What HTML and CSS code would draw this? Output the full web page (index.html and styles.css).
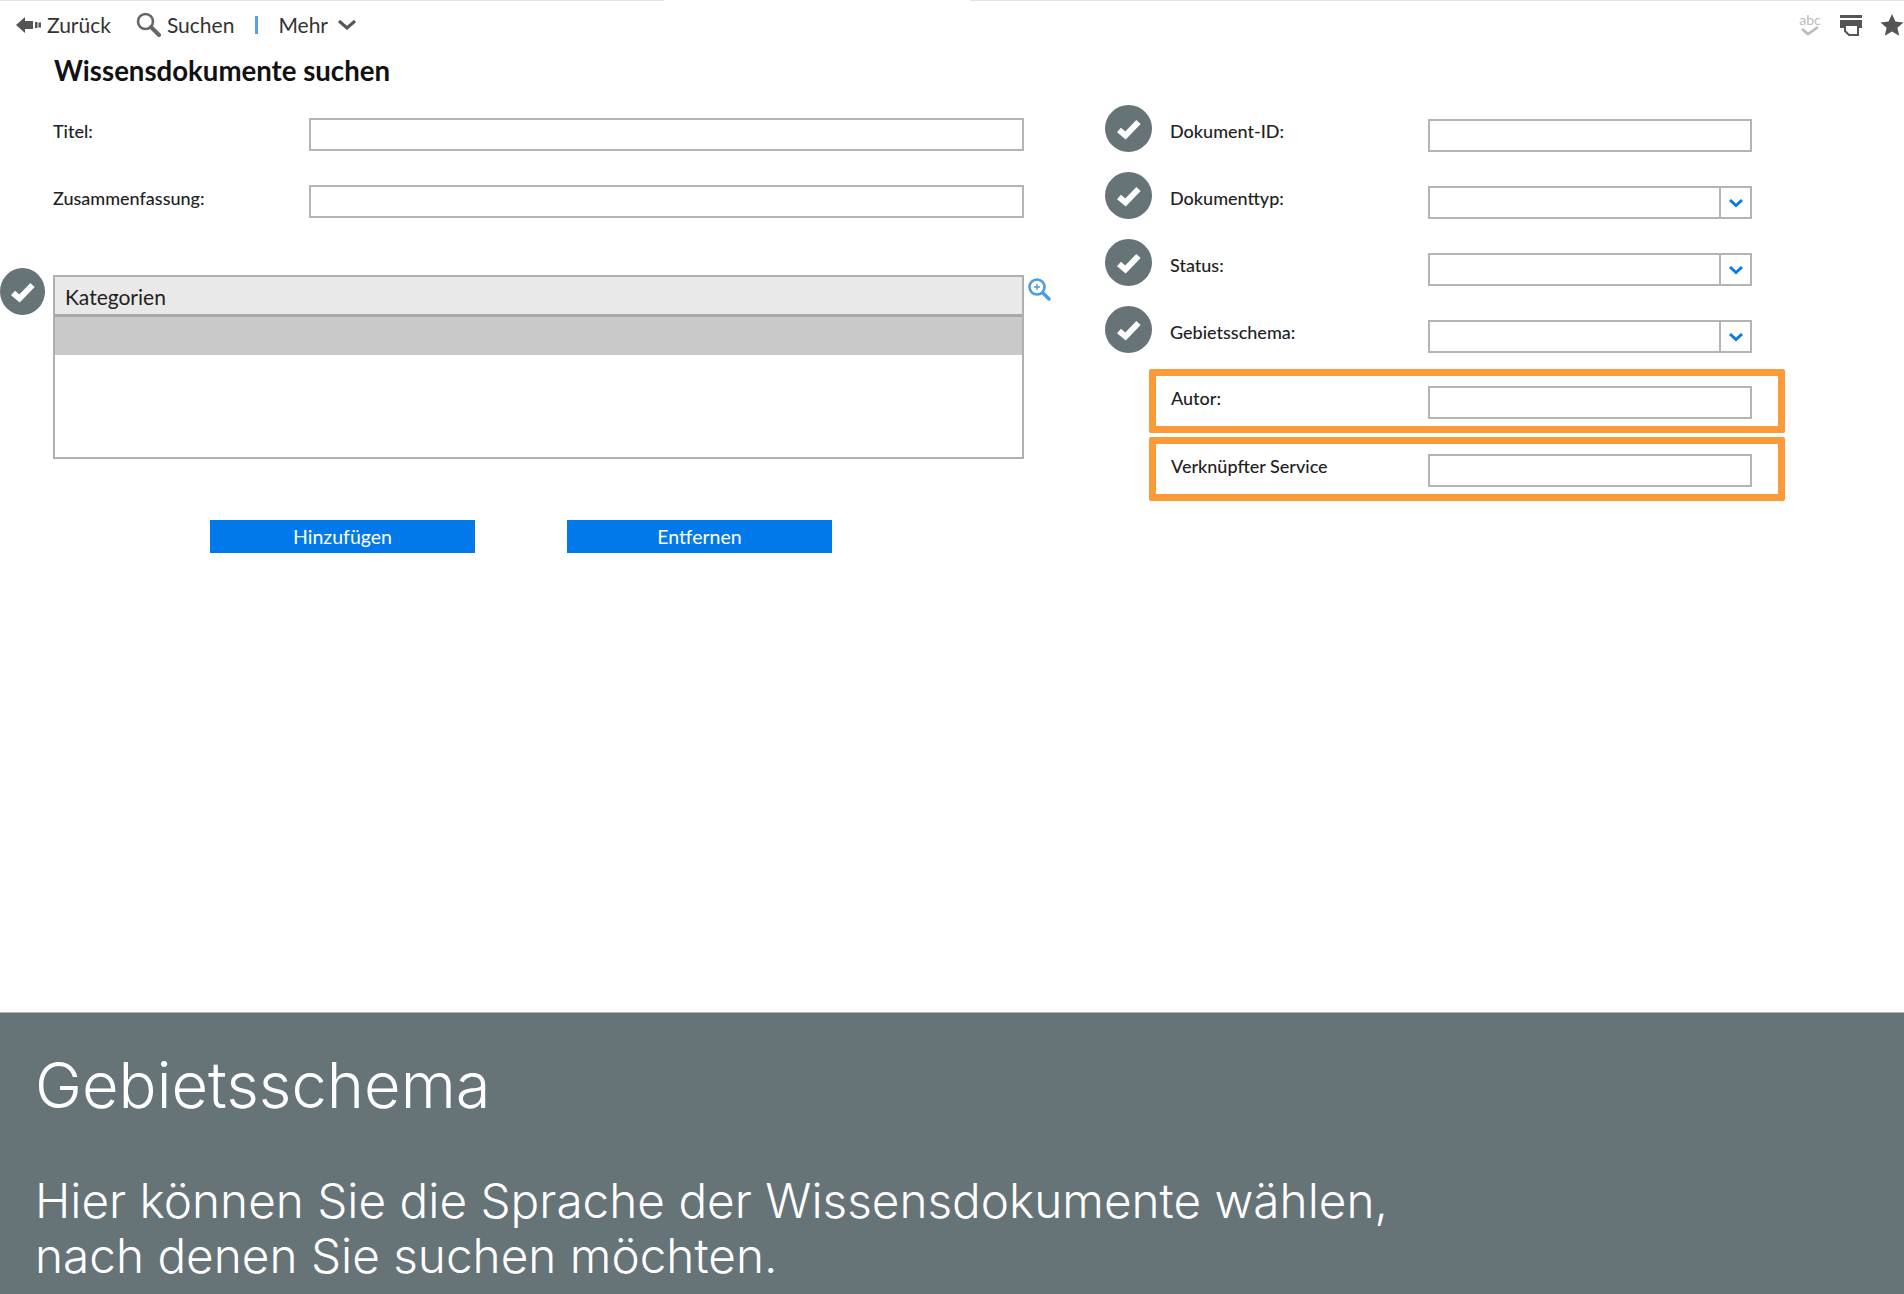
FILE: index.html
```html
<!doctype html>
<html lang="de">
<head>
<meta charset="UTF-8">
<title>Wissensdokumente suchen</title>
<link rel="stylesheet" href="styles.css">
</head>
<body>
<div class="screen">
  <div class="topline"><span></span><span></span></div>
  <div class="toolbar">
    <div class="tools">
      <a class="tool">
        <svg class="ic-back" width="25" height="18" viewBox="0 0 25 18"><path d="M0 9 9 1v4h8v8H9v4z" fill="#555"/><rect x="19" y="6" width="2.500" height="6" fill="#555"/><rect x="22.500" y="6.500" width="2.500" height="5" fill="#555"/></svg>
        Zurück
      </a>
      <a class="tool tool-search">
        <svg width="25" height="25" viewBox="0 0 25 25"><circle cx="9.500" cy="9.500" r="7.500" fill="none" stroke="#666" stroke-width="2.600"/><path d="M15 15l8 8" stroke="#666" stroke-width="4" stroke-linecap="round"/></svg>
        Suchen
      </a>
      <span class="sep"></span>
      <a class="tool">Mehr
        <svg class="ic-more" width="20" height="11" viewBox="0 0 20 11"><path d="M2 2l8 7 8-7" fill="none" stroke="#555" stroke-width="3"/></svg>
      </a>
    </div>
    <div class="tools-right">
      <span class="spell">abc
        <svg width="20" height="10" viewBox="0 0 20 10"><path d="M2 3l6 5L18 1" fill="none" stroke="#bbb" stroke-width="2.600"/></svg>
      </span>
      <svg width="24" height="22" viewBox="0 0 24 22"><rect x="1" y="1" width="22" height="3" fill="#555"/><path d="M1 6h22v8h-4v-3H6v3H1z" fill="#555"/><path d="M6 11h13v10H10l-4-4z" fill="#fff" stroke="#555" stroke-width="2"/></svg>
      <svg width="24" height="22" viewBox="0 0 24 22"><path d="M12 0l3.400 7.600 8.100.8-6.100 5.400 1.800 8-7.200-4.200-7.200 4.200 1.800-8L.5 8.400l8.100-.8z" fill="#555"/></svg>
    </div>
  </div>

  <h1>Wissensdokumente suchen</h1>

  <div class="columns">
    <div class="col-left">
      <div class="row">
        <label>Titel:</label>
        <div class="field"></div>
      </div>
      <div class="row">
        <label>Zusammenfassung:</label>
        <div class="field"></div>
      </div>

      <div class="cat-wrap">
        <span class="check check-left">
          <svg width="26" height="22" viewBox="0 0 26 22"><path d="M3 12l6.500 5.500L22.500 4" fill="none" stroke="#fff" stroke-width="6"/></svg>
        </span>
        <div class="cat">
          <div class="cat-head">Kategorien</div>
          <div class="cat-sel"></div>
        </div>
        <svg class="cat-zoom" width="24" height="24" viewBox="0 0 24 24"><circle cx="10" cy="10" r="7.500" fill="none" stroke="#4a9be0" stroke-width="2.600"/><path d="M16 16l6 6" stroke="#4a9be0" stroke-width="3.400" stroke-linecap="round"/><path d="M10 7v6M7 10h6" stroke="#4a9be0" stroke-width="1.400"/></svg>
      </div>

      <div class="buttons">
        <a class="btn">Hinzufügen</a>
        <a class="btn">Entfernen</a>
      </div>
    </div>

    <div class="col-right">
      <div class="row-r">
        <span class="check"><svg width="26" height="22" viewBox="0 0 26 22"><path d="M3 12l6.500 5.500L22.500 4" fill="none" stroke="#fff" stroke-width="6"/></svg></span>
        <label>Dokument-ID:</label>
        <div class="field"></div>
      </div>
      <div class="row-r">
        <span class="check"><svg width="26" height="22" viewBox="0 0 26 22"><path d="M3 12l6.500 5.500L22.500 4" fill="none" stroke="#fff" stroke-width="6"/></svg></span>
        <label>Dokumenttyp:</label>
        <div class="field select"><span class="arrow"><svg width="16" height="10" viewBox="0 0 16 10"><path d="M2 2l6 5.500L14 2" fill="none" stroke="#0a7be0" stroke-width="3"/></svg></span></div>
      </div>
      <div class="row-r">
        <span class="check"><svg width="26" height="22" viewBox="0 0 26 22"><path d="M3 12l6.500 5.500L22.500 4" fill="none" stroke="#fff" stroke-width="6"/></svg></span>
        <label>Status:</label>
        <div class="field select"><span class="arrow"><svg width="16" height="10" viewBox="0 0 16 10"><path d="M2 2l6 5.500L14 2" fill="none" stroke="#0a7be0" stroke-width="3"/></svg></span></div>
      </div>
      <div class="row-r">
        <span class="check"><svg width="26" height="22" viewBox="0 0 26 22"><path d="M3 12l6.500 5.500L22.500 4" fill="none" stroke="#fff" stroke-width="6"/></svg></span>
        <label>Gebietsschema:</label>
        <div class="field select"><span class="arrow"><svg width="16" height="10" viewBox="0 0 16 10"><path d="M2 2l6 5.500L14 2" fill="none" stroke="#0a7be0" stroke-width="3"/></svg></span></div>
      </div>
      <div class="row-hl">
        <label>Autor:</label>
        <div class="field"></div>
      </div>
      <div class="row-hl">
        <label>Verknüpfter Service</label>
        <div class="field"></div>
      </div>
    </div>
  </div>

  <div class="caption">
    <h2>Gebietsschema</h2>
    <p>Hier können Sie die Sprache der Wissensdokumente wählen,<br>nach denen Sie suchen möchten.</p>
  </div>
</div>
</body>
</html>
```
FILE: styles.css
```css
html, body {
  margin: 0;
  padding: 0;
  background: #fff;
}
.screen {
  width: 1904px;
  height: 1294px;
  display: flex;
  flex-direction: column;
  overflow: hidden;
  font-family: Lato, "Noto Sans", sans-serif;
  color: #222;
}
.topline {
  height: 1px;
  display: flex;
  justify-content: space-between;
}
.topline span {
  background: #e2e2e2;
}
.topline span:first-child {
  width: 664px;
}
.topline span:last-child {
  width: 934px;
}
.toolbar {
  height: 47px;
  display: flex;
  justify-content: space-between;
  align-items: center;
  padding: 0 0 0 16px;
}
.tools {
  display: flex;
  align-items: center;
}
.tool {
  display: flex;
  align-items: center;
  gap: 6px;
  font-size: 21px;
  color: #333;
}
.tool-search {
  margin-left: 25px;
}
.sep {
  width: 3px;
  height: 18px;
  background: #5a9fd8;
  margin: 0 20px 0 21px;
}
.ic-more {
  margin-left: 3px;
}
.tools-right {
  display: flex;
  align-items: center;
  gap: 17px;
}
.spell {
  display: flex;
  flex-direction: column;
  align-items: center;
  font-size: 14px;
  line-height: 12px;
  color: #bbb;
  width: 24px;
}
h1 {
  margin: 5px 0 0 54px;
  font-size: 27.600px;
  line-height: 36px;
  font-weight: 700;
  color: #111;
}
.columns {
  display: flex;
  flex: 1;
  margin-top: 16px;
}
.col-left {
  width: 971px;
  margin-left: 53px;
  padding-top: 13px;
}
.col-right {
  margin-left: 81px;
}
label {
  font-size: 18px;
  font-weight: 500;
  color: #222;
  line-height: 24px;
}
.field {
  box-sizing: border-box;
  height: 33px;
  border: 2px solid #b4b4b4;
  background: #fff;
  position: relative;
}
.row {
  display: flex;
  height: 33px;
  margin-bottom: 34px;
}
.row label {
  width: 256px;
  flex: none;
  margin-top: 1px;
}
.row .field {
  flex: 1;
}
.cat-wrap {
  position: relative;
  margin-top: 57px;
}
.cat {
  box-sizing: border-box;
  height: 184px;
  border: 2px solid #b0b0b0;
}
.cat-head {
  height: 40px;
  box-sizing: border-box;
  background: #e9e9e9;
  border-bottom: 3px solid #a8a8a8;
  font-size: 21px;
  line-height: 39px;
  padding-left: 10px;
  color: #222;
}
.cat-sel {
  height: 38px;
  background: #c9c9c9;
}
.cat-zoom {
  position: absolute;
  left: 974px;
  top: 2px;
}
.check {
  width: 47px;
  height: 47px;
  flex: none;
  border-radius: 50%;
  background: #667377;
  display: flex;
  align-items: center;
  justify-content: center;
}
.check-left {
  position: absolute;
  left: -53px;
  top: -7px;
  width: 45px;
  height: 47px;
}
.buttons {
  display: flex;
  gap: 92px;
  margin: 61px 0 0 157px;
}
.btn {
  width: 265px;
  height: 33px;
  background: #0279ea;
  color: #fff;
  font-size: 19.500px;
  line-height: 33px;
  text-align: center;
}
.row-r {
  display: flex;
  height: 47px;
  margin-bottom: 20px;
  align-items: flex-start;
}
.row-r:nth-child(4) {
  margin-bottom: 16px;
}
.row-r label {
  width: 258px;
  margin-left: 18px;
  flex: none;
  margin-top: 14px;
}
.row-r .field {
  width: 324px;
  margin-top: 14px;
}
.select .arrow {
  position: absolute;
  right: 0;
  top: 0;
  bottom: 0;
  width: 29px;
  border-left: 2px solid #b4b4b4;
  display: flex;
  align-items: center;
  justify-content: center;
}
.row-hl {
  box-sizing: border-box;
  width: 636px;
  height: 64px;
  margin: 0 0 4px 44px;
  border: 7px solid #fb9a38;
  border-radius: 2px;
  display: flex;
  align-items: flex-start;
  padding-top: 10px;
}
.row-hl label {
  width: 257px;
  margin-left: 15px;
  flex: none;
}
.row-hl .field {
  width: 324px;
}
.caption {
  height: 282px;
  box-sizing: border-box;
  background: #667377;
  border-top: 1px solid #aeb5b7;
  color: #fff;
  padding: 34px 35px 0;
  font-family: Inter, "Noto Sans", sans-serif;
  font-weight: 300;
}
.caption h2 {
  margin: 0;
  font-size: 63.200px;
  line-height: 76px;
  font-weight: 300;
}
.caption p {
  margin: 51px 0 0;
  font-size: 47.700px;
  line-height: 55px;
}
```
